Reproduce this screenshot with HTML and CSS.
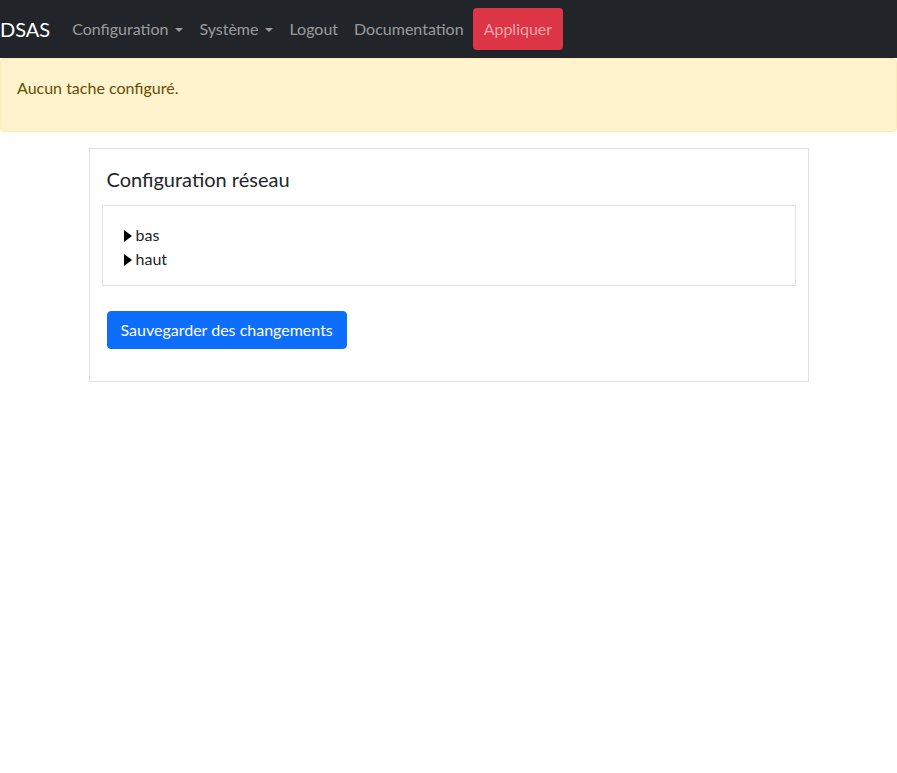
FILE: index.html
```html
<!DOCTYPE html>
<html lang="fr">
<head>
<meta charset="utf-8">
<title>DSAS</title>
<link rel="stylesheet" href="styles.css">
</head>
<body>
<nav class="navbar">
  <span class="brand">DSAS</span>
  <ul class="nav">
    <li class="nav-link dropdown">Configuration</li>
    <li class="nav-link dropdown">Système</li>
    <li class="nav-link">Logout</li>
    <li class="nav-link">Documentation</li>
    <li class="nav-link apply">Appliquer</li>
  </ul>
</nav>
<div class="alert"><p>Aucun tache configuré.</p></div>
<main class="card">
  <h5 class="card-title">Configuration réseau</h5>
  <div class="tree">
    <div class="tree-item"><span class="arrow"></span>bas</div>
    <div class="tree-item"><span class="arrow"></span>haut</div>
  </div>
  <button class="btn-primary">Sauvegarder des changements</button>
</main>
</body>
</html>
```
FILE: styles.css
```css
* { box-sizing: border-box; }
body {
  margin: 0;
  font-family: Lato, "Noto Sans", sans-serif;
  font-size: 16px;
  line-height: 24px;
  color: #212529;
  background: #fff;
}
.navbar {
  display: flex;
  align-items: center;
  height: 58px;
  background: #212529;
  padding: 8px 0;
}
.brand {
  font-size: 20px;
  line-height: 30px;
  color: #fff;
  margin-right: 14px;
}
.nav {
  display: flex;
  align-items: center;
  list-style: none;
  margin: 0;
  padding: 0;
}
.nav-link {
  padding: 8px;
  color: rgba(255,255,255,.55);
  white-space: nowrap;
}
.dropdown::after {
  content: "";
  display: inline-block;
  margin-left: 7px;
  vertical-align: 3px;
  border-top: 4.8px solid;
  border-right: 4.8px solid transparent;
  border-left: 4.8px solid transparent;
}
.apply {
  background: #dc3545;
  border-radius: 4px;
  padding: 9px 11px 9px 11px;
  margin-left: 1px;
  color: rgba(255,255,255,.55);
}
.alert {
  background: #fff3cd;
  border: 1px solid #ffecb5;
  border-radius: 4px;
  color: #664d03;
  padding: 17px 16px 15px;
}
.alert p { margin: 0 0 16px; }
.card {
  width: 720px;
  margin: 16px auto 0;
  border: 1px solid #dee2e6;
  padding: 18px 12px 32px;
}
.card-title {
  font-size: 20px;
  font-weight: 400;
  line-height: 24px;
  margin: 0 0 14px 5px;
}
.tree {
  border: 1px solid #dee2e6;
  padding: 17px 0 14px 20px;
}
.tree-item {
  display: flex;
  align-items: center;
}
.arrow {
  width: 0;
  height: 0;
  border-left: 8px solid #000;
  border-top: 6px solid transparent;
  border-bottom: 6px solid transparent;
  margin: 2px 4px 0 1px;
}
.btn-primary {
  margin: 25px 0 0 5px;
  font: inherit;
  color: #fff;
  background: #0d6efd;
  border: 1px solid #0d6efd;
  border-radius: 4px;
  padding: 6px 13px;
  line-height: 24px;
}
```
